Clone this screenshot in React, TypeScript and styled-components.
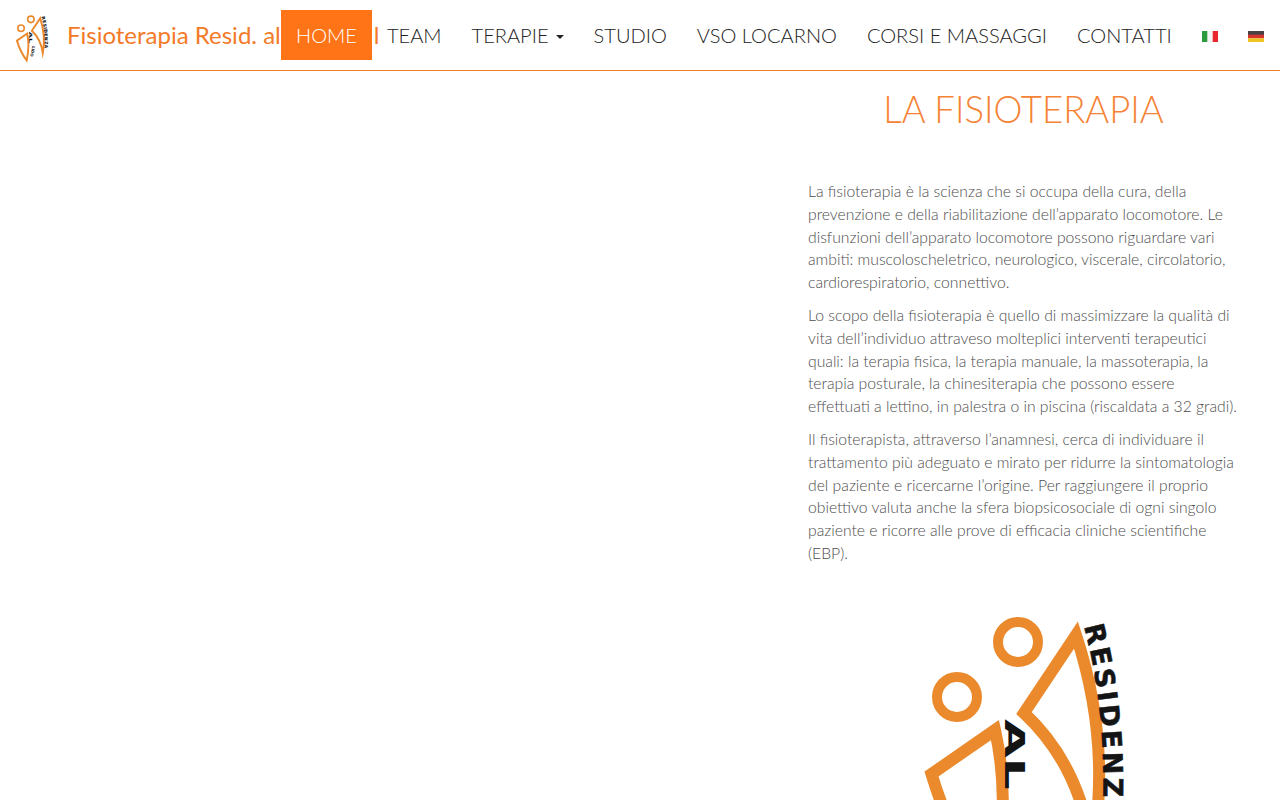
import styled, { createGlobalStyle } from "styled-components";

const navItems = ["TEAM", "STUDIO", "VSO LOCARNO", "CORSI E MASSAGGI", "CONTATTI"];

const GlobalStyle = createGlobalStyle`
  html, body {
    margin: 0;
    padding: 0;
    height: 800px;
    overflow: hidden;
    background: #fff;
    font-family: Lato, "Open Sans", sans-serif;
  }
  * {
    box-sizing: border-box;
  }
`;

const Header = styled.header`
  display: flex;
  align-items: flex-start;
  height: 71px;
  border-bottom: 1px solid #f17c2b;
`;

const Brand = styled.a`
  display: flex;
  align-items: center;
  flex: none;
  width: 379px;
  height: 70px;
  padding: 0 0 2px 15px;
  overflow: hidden;
  white-space: nowrap;
  color: #f37a27;
  font-size: 24px;
  font-weight: 400;
`;

const BrandMark = styled.svg`
  flex: none;
  width: 34px;
  height: 50px;
  margin: 12px 18px 0 0;
`;

const BrandTail = styled.span`
  margin-left: 93px;
`;

const Nav = styled.nav`
  position: relative;
  display: flex;
  align-items: flex-start;
  margin: 10px 0 0 -98px;
`;

const NavLink = styled.a<{ $active?: boolean }>`
  display: flex;
  align-items: center;
  height: 50px;
  padding: 0 15px;
  color: ${({ $active }) => ($active ? "#fff" : "#222")};
  background: ${({ $active }) => ($active ? "#ff7416" : "transparent")};
  font-size: 20.07px;
  font-weight: 300;
  white-space: nowrap;
`;

const Caret = styled.span`
  width: 0;
  height: 0;
  margin: 3px 0 0 7px;
  border-top: 4px solid #222;
  border-left: 4px solid transparent;
  border-right: 4px solid transparent;
`;

const Flag = styled.svg`
  width: 16px;
  height: 11px;
  filter: blur(0.3px);
`;

const FlagLink = styled.a`
  display: flex;
  align-items: center;
  height: 50px;
  padding: 2px 15px 0;
`;

const Main = styled.main`
  display: grid;
  grid-template-columns: 793px 462px;
`;

const Article = styled.article`
  grid-column: 2;
  padding: 0 16px 0 15px;
`;

const Title = styled.h1`
  margin: 17px 0 50px;
  color: #f58335;
  font-size: 36.5px;
  font-weight: 300;
  line-height: 42px;
  text-align: center;
  white-space: nowrap;
`;

const Paragraph = styled.p`
  margin: 0 0 10px;
  color: #4d4d4d;
  font-size: 15.72px;
  font-weight: 300;
  line-height: 22.8px;
`;

const LogoWrap = styled.div`
  display: flex;
  justify-content: center;
  margin-top: 50px;
`;

const BigLogo = styled.svg`
  display: block;
  width: 210px;
  height: 310px;
  margin-left: 3px;
`;

const LogoDrawing = () => (
  <>
    <defs>
      <path id="residenza-arc" d="M164 11 Q186 95 183 190 Q181 245 170 310" />
      <path id="lido-arc" d="M106 192 Q100 250 72 306" />
    </defs>
    <g fill="none" stroke="#ea8a2d" strokeWidth="10">
      <circle cx="98" cy="27" r="20" />
      <circle cx="37" cy="82" r="20" />
    </g>
    <g fill="none" stroke="#ea8a2d" strokeWidth="12" strokeMiterlimit="10">
      <path d="M156 20 Q192 130 172 236 Q160 150 104 98 Z" />
      <path d="M75 115 L11.5 159 Q33 230 72 282 Q92 190 75 115 Z" />
    </g>
    <g fill="#141414" fontFamily="'DejaVu Sans', sans-serif" fontWeight="700">
      <text fontSize="27" letterSpacing="3" stroke="#141414" strokeWidth="0.6">
        <textPath href="#residenza-arc">RESIDENZA</textPath>
      </text>
      <text fontSize="27" transform="translate(85 104) rotate(90) scale(1.85 1)">
        AL
      </text>
      <text fontSize="24">
        <textPath href="#lido-arc">LIDO</textPath>
      </text>
    </g>
  </>
);

const App = () => {
  return (
    <>
      <GlobalStyle />
      <Header>
        <Brand>
          <BrandMark viewBox="0 0 210 310">
            <LogoDrawing />
          </BrandMark>
          Fisioterapia Resid. al
          <BrandTail>l</BrandTail>
        </Brand>
        <Nav>
          <NavLink $active>HOME</NavLink>
          <NavLink>{navItems[0]}</NavLink>
          <NavLink>
            TERAPIE
            <Caret />
          </NavLink>
          {navItems.slice(1).map((item) => (
            <NavLink key={item}>{item}</NavLink>
          ))}
          <FlagLink>
            <Flag viewBox="0 0 16 11">
              <rect width="6" height="11" fill="#2a9a3c" />
              <rect x="5.3" width="5.4" height="11" fill="#f4f4f4" />
              <rect x="10.7" width="5.3" height="11" fill="#e8262c" />
            </Flag>
          </FlagLink>
          <FlagLink>
            <Flag viewBox="0 0 16 11">
              <rect width="16" height="4" fill="#4a4242" />
              <rect y="3.7" width="16" height="3.6" fill="#d9332e" />
              <rect y="7.3" width="16" height="3.7" fill="#eec21f" />
            </Flag>
          </FlagLink>
        </Nav>
      </Header>
      <Main>
        <Article>
          <Title>LA FISIOTERAPIA</Title>
          <Paragraph>
            La fisioterapia è la scienza che si occupa della cura, della prevenzione e della
            riabilitazione dell’apparato locomotore. Le disfunzioni dell’apparato locomotore
            possono riguardare vari ambiti: muscoloscheletrico, neurologico, viscerale,
            circolatorio, cardiorespiratorio, connettivo.
          </Paragraph>
          <Paragraph>
            Lo scopo della fisioterapia è quello di massimizzare la qualità di vita dell’individuo
            attraveso molteplici interventi terapeutici quali: la terapia fisica, la terapia
            manuale, la massoterapia, la terapia posturale, la chinesiterapia che possono essere
            effettuati a lettino, in palestra o in piscina (riscaldata a 32 gradi).
          </Paragraph>
          <Paragraph>
            Il fisioterapista, attraverso l’anamnesi, cerca di individuare il trattamento più
            adeguato e mirato per ridurre la sintomatologia del paziente e ricercarne l’origine.
            Per raggiungere il proprio obiettivo valuta anche la sfera biopsicosociale di ogni
            singolo paziente e ricorre alle prove di efficacia cliniche scientifiche (EBP).
          </Paragraph>
          <LogoWrap>
            <BigLogo viewBox="0 0 210 310">
              <LogoDrawing />
            </BigLogo>
          </LogoWrap>
        </Article>
      </Main>
    </>
  );
};

export default App;
